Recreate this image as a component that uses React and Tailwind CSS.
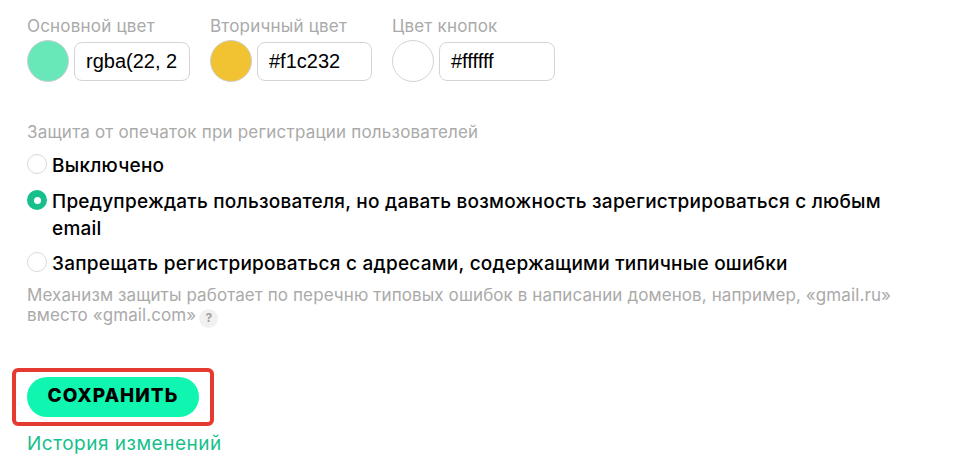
const colors = [
  { label: 'Основной цвет', swatch: 'bg-[#68e8b8] border-[#cfcfcf]', value: 'rgba(22, 2', width: 'w-[116px]' },
  { label: 'Вторичный цвет', swatch: 'bg-[#f1c232] border-[#cfcfcf]', value: '#f1c232', width: 'w-[115px]' },
  { label: 'Цвет кнопок', swatch: 'bg-white border-[#d4d4d4]', value: '#ffffff', width: 'w-[116px]' },
];

const Radio = ({ checked }) =>
  checked ? (
    <span className="mt-[1px] flex h-5 w-5 shrink-0 items-center justify-center rounded-full bg-[#16bf8c]">
      <span className="h-[7px] w-[7px] rounded-full bg-white" />
    </span>
  ) : (
    <span className="mt-[1px] h-5 w-5 shrink-0 rounded-full border border-[#d9d9d9] bg-white" />
  );

const Option = ({ checked, className, children }) => (
  <label className={`flex items-start gap-[5px] text-[19px] leading-[27px] font-[450] tracking-[0.24px] text-black ${className}`}>
    <Radio checked={checked} />
    <span className="-mt-[1px]">{children}</span>
  </label>
);

export default function App() {
  return (
    <div className="h-[472px] w-[966px] overflow-hidden bg-white pl-[27px] pt-[15px] font-['Inter',sans-serif]">
      <div className="flex gap-[20px]">
        {colors.map((c) => (
          <div key={c.label}>
            <div className="text-[17px] leading-[22px] tracking-[0.2px] text-[#aaaaaa]">{c.label}</div>
            <div className="mt-[3px] flex items-center gap-[5px]">
              <div className={`h-[42px] w-[42px] rounded-full border ${c.swatch}`} />
              <div className={`flex h-[39px] ${c.width} items-center overflow-hidden rounded-[8px] border border-[#d4d4d4] pl-[11px] font-['Liberation_Sans',sans-serif] text-[20px] text-black`}>
                {c.value}
              </div>
            </div>
          </div>
        ))}
      </div>

      <div className="mt-[39px] text-[17px] leading-[22px] tracking-[0.2px] text-[#aaaaaa]">
        Защита от опечаток при регистрации пользователей
      </div>
      <Option className="mt-[10px]">Выключено</Option>
      <Option checked className="mt-[10px] w-[880px]">
        Предупреждать пользователя, но давать возможность зарегистрироваться с любым email
      </Option>
      <Option className="mt-[9px]">Запрещать регистрироваться с адресами, содержащими типичные ошибки</Option>

      <div className="mt-[8px] w-[880px] text-[17px] leading-[20px] tracking-[0.1px] text-[#aaaaaa]">
        Механизм защиты работает по перечню типовых ошибок в написании доменов, например, «gmail.ru» вместо «gmail.com»
        <span className="ml-[3px] inline-flex h-[19px] w-[19px] items-center justify-center rounded-full bg-[#f1f1f1] align-[-1px] text-[12px] leading-none font-bold text-[#a0a0a0]">
          ?
        </span>
      </div>

      <div className="-ml-[15px] mt-[40px] w-fit rounded-[6px] border-[4px] border-[#e53a2f] px-[11px] py-[5px]">
        <button className="flex h-[40px] w-[172px] items-center justify-center rounded-full bg-[#10f5b0] text-[19px] font-extrabold tracking-[1px] text-black">
          СОХРАНИТЬ
        </button>
      </div>
      <a className="mt-[5px] block text-[19px] leading-[26px] tracking-[0.5px] text-[#16bf8c]">История изменений</a>
    </div>
  );
}
